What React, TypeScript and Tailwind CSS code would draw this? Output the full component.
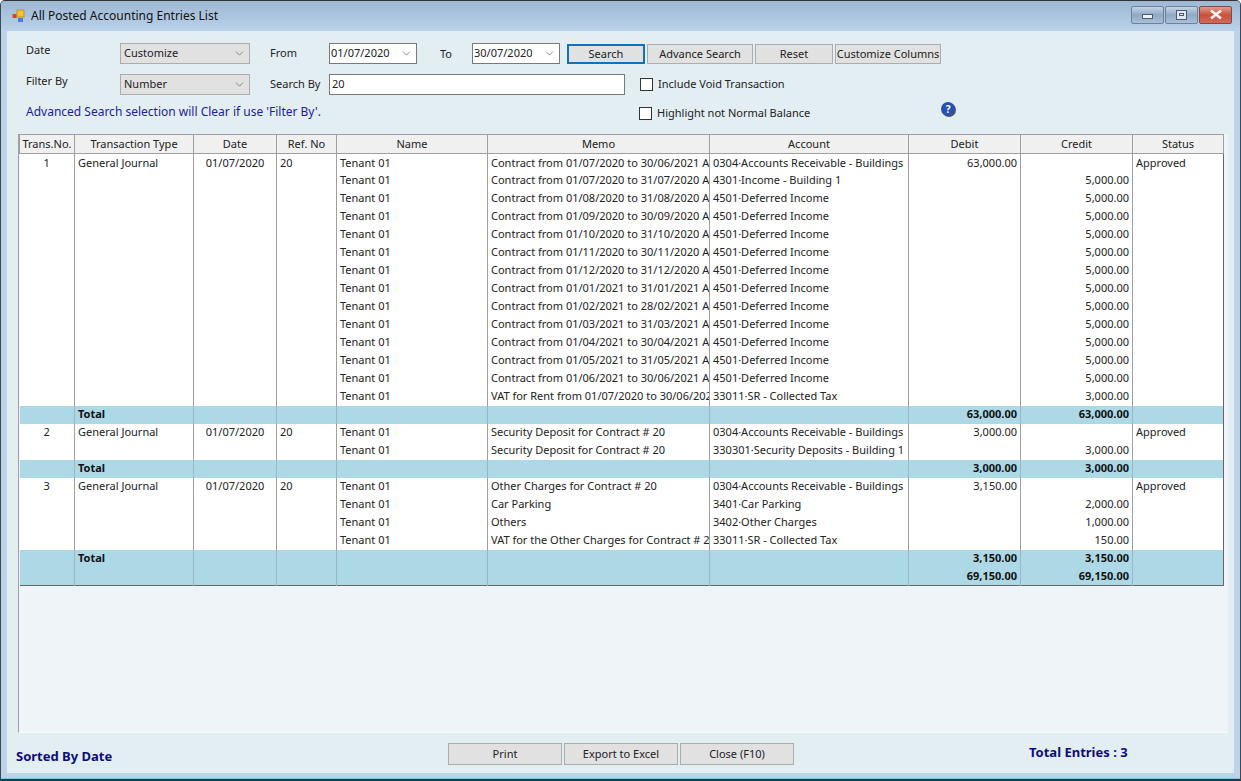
import { ChevronDown } from "lucide-react";

const cols = [55, 119, 83, 60, 151, 222, 199, 112, 112, 91];

type Row = {
  no?: string;
  type?: string;
  date?: string;
  ref?: string;
  name?: string;
  memo?: string;
  account?: string;
  debit?: string;
  credit?: string;
  status?: string;
  total?: boolean;
};

const contract = (memo: string, account: string, credit = "5,000.00"): Row => ({
  name: "Tenant 01",
  memo,
  account,
  credit,
});

const rows: Row[] = [
  {
    no: "1",
    type: "General Journal",
    date: "01/07/2020",
    ref: "20",
    name: "Tenant 01",
    memo: "Contract from 01/07/2020 to 30/06/2021 Annual Rent",
    account: "0304·Accounts Receivable - Buildings",
    debit: "63,000.00",
    status: "Approved",
  },
  contract("Contract from 01/07/2020 to 31/07/2020 Annual Rent", "4301·Income - Building 1"),
  contract("Contract from 01/08/2020 to 31/08/2020 Annual Rent", "4501·Deferred Income"),
  contract("Contract from 01/09/2020 to 30/09/2020 Annual Rent", "4501·Deferred Income"),
  contract("Contract from 01/10/2020 to 31/10/2020 Annual Rent", "4501·Deferred Income"),
  contract("Contract from 01/11/2020 to 30/11/2020 Annual Rent", "4501·Deferred Income"),
  contract("Contract from 01/12/2020 to 31/12/2020 Annual Rent", "4501·Deferred Income"),
  contract("Contract from 01/01/2021 to 31/01/2021 Annual Rent", "4501·Deferred Income"),
  contract("Contract from 01/02/2021 to 28/02/2021 Annual Rent", "4501·Deferred Income"),
  contract("Contract from 01/03/2021 to 31/03/2021 Annual Rent", "4501·Deferred Income"),
  contract("Contract from 01/04/2021 to 30/04/2021 Annual Rent", "4501·Deferred Income"),
  contract("Contract from 01/05/2021 to 31/05/2021 Annual Rent", "4501·Deferred Income"),
  contract("Contract from 01/06/2021 to 30/06/2021 Annual Rent", "4501·Deferred Income"),
  contract("VAT for Rent from 01/07/2020 to 30/06/2021", "33011·SR - Collected Tax", "3,000.00"),
  { type: "Total", debit: "63,000.00", credit: "63,000.00", total: true },
  {
    no: "2",
    type: "General Journal",
    date: "01/07/2020",
    ref: "20",
    name: "Tenant 01",
    memo: "Security Deposit for Contract # 20",
    account: "0304·Accounts Receivable - Buildings",
    debit: "3,000.00",
    status: "Approved",
  },
  contract("Security Deposit for Contract # 20", "330301·Security Deposits - Building 1", "3,000.00"),
  { type: "Total", debit: "3,000.00", credit: "3,000.00", total: true },
  {
    no: "3",
    type: "General Journal",
    date: "01/07/2020",
    ref: "20",
    name: "Tenant 01",
    memo: "Other Charges for Contract # 20",
    account: "0304·Accounts Receivable - Buildings",
    debit: "3,150.00",
    status: "Approved",
  },
  contract("Car Parking", "3401·Car Parking", "2,000.00"),
  contract("Others", "3402·Other Charges", "1,000.00"),
  contract("VAT for the Other Charges for Contract # 20", "33011·SR - Collected Tax", "150.00"),
  { type: "Total", debit: "3,150.00", credit: "3,150.00", total: true },
  { debit: "69,150.00", credit: "69,150.00", total: true },
];

function Combo({ value }: { value: string }) {
  return (
    <div className="flex h-[21px] w-[130px] items-center justify-between border border-[#adadad] bg-[#e1e1e1] pl-[3px] pr-[3px]">
      <span>{value}</span>
      <ChevronDown size={13} strokeWidth={1.2} className="text-[#555]" />
    </div>
  );
}

function DateBox({ value }: { value: string }) {
  return (
    <div className="flex h-[21px] w-[88px] items-center justify-between border border-[#7a7a7a] bg-white pl-[1px] pr-[3px]">
      <span>{value}</span>
      <ChevronDown size={13} strokeWidth={1.2} className="text-[#555]" />
    </div>
  );
}

function Btn({ label, w, active }: { label: string; w: string; active?: boolean }) {
  return (
    <button
      className={`${w} h-full shrink-0 bg-[#e1e1e1] text-center ${
        active ? "border-2 border-[#0f72bd]" : "border border-[#adadad]"
      }`}
    >
      {label}
    </button>
  );
}

function Check({ label }: { label: string }) {
  return (
    <div className="flex items-center gap-[5px]">
      <span className="h-[13px] w-[13px] border border-[#333] bg-white" />
      <span>{label}</span>
    </div>
  );
}

function WinBtn({ kind }: { kind: "min" | "max" | "close" }) {
  if (kind === "close") {
    return (
      <div className="flex h-[18px] w-[33px] items-center justify-center rounded-[2px] border border-[#7d4a45] bg-gradient-to-b from-[#e09a8c] via-[#c9503c] to-[#d06a58]">
        <svg width="14" height="11" viewBox="0 0 14 11">
          <path d="M2 1.5 L12 9.5 M12 1.5 L2 9.5" stroke="#f4f4f4" strokeWidth="2.6" />
        </svg>
      </div>
    );
  }
  return (
    <div className="flex h-[18px] w-[33px] items-center justify-center rounded-[2px] border border-[#6d8199] bg-gradient-to-b from-[#c3d4e6] via-[#8fa9c6] to-[#a9c0d8]">
      {kind === "min" ? (
        <span className="mt-[4px] h-[5px] w-[11px] border border-[#4d5a68] bg-[#eef3f8]" />
      ) : (
        <span className="flex h-[10px] w-[11px] items-center justify-center border border-[#4d5a68] bg-[#dfe8f1]">
          <span className="h-[3px] w-[5px] border border-[#4d5a68]" />
        </span>
      )}
    </div>
  );
}

export default function App() {
  return (
    <div
      className="flex h-[781px] w-[1241px] flex-col overflow-hidden rounded-t-[5px] border-x border-t border-b-2 border-x-[#3c4a55] border-t-[#333] border-b-[#1f3a48] bg-[#bcd3ea] text-[#222] text-[11px]"
      style={{ fontFamily: '"Noto Sans", Tahoma, sans-serif' }}
    >
      {/* title bar */}
      <div className="flex h-[30px] shrink-0 items-center justify-between bg-gradient-to-b from-[#9db8d4] to-[#bad2ea] pl-[11px] pr-[8px]">
        <div className="flex items-center gap-[5px]">
          <svg width="14" height="14" viewBox="0 0 14 14">
            <rect x="5" y="1" width="7" height="7" fill="#f4c430" stroke="#b98a10" strokeWidth="0.8" />
            <rect x="0.5" y="5" width="4" height="4" fill="#d8432c" />
            <rect x="6" y="9" width="5" height="4" fill="#4f7fd0" />
          </svg>
          <span className="text-[12px] text-[#111]">All Posted Accounting Entries List</span>
        </div>
        <div className="flex gap-[1px] pb-[3px]">
          <WinBtn kind="min" />
          <WinBtn kind="max" />
          <WinBtn kind="close" />
        </div>
      </div>

      <div className="mx-[6px] flex min-h-0 flex-1 flex-col bg-[#e3eef2]">
        {/* filters */}
        <div className="h-[103px] shrink-0 pl-[19px] pt-[12px]">
          <div className="flex h-[21px] items-center">
            <span className="w-[94px] -translate-y-[3px]">Date</span>
            <Combo value="Customize" />
            <span className="ml-[20px] w-[59px]">From</span>
            <DateBox value="01/07/2020" />
            <span className="ml-[23px] w-[32px] translate-y-[1px]">To</span>
            <DateBox value="30/07/2020" />
            <div className="ml-[7px] flex h-[20px] gap-[2px] self-end">
              <Btn label="Search" w="w-[78px]" active />
              <Btn label="Advance Search" w="w-[106px]" />
              <Btn label="Reset" w="w-[78px]" />
              <Btn label="Customize Columns" w="w-[106px]" />
            </div>
          </div>
          <div className="mt-[10px] flex h-[21px] items-center">
            <span className="w-[94px] -translate-y-[3px]">Filter By</span>
            <Combo value="Number" />
            <span className="ml-[20px] w-[59px]">Search By</span>
            <div className="flex h-[21px] w-[296px] items-center border border-[#7a7a7a] bg-white pl-[2px]">20</div>
            <div className="ml-[15px]">
              <Check label="Include Void Transaction" />
            </div>
          </div>
          <div className="flex items-start">
            <span className="mt-[8px] w-[613px] text-[12px] text-[#1c1c9c]">
              Advanced Search selection will Clear if use 'Filter By'.
            </span>
            <div className="mt-[10px]">
              <Check label="Highlight not Normal Balance" />
            </div>
            <span className="ml-[131px] mt-[7px] flex h-[14px] w-[14px] items-center justify-center rounded-full bg-[#2a50b4] text-[10px] font-bold leading-none text-white shadow-[1px_1px_0_#555]">
              ?
            </span>
          </div>
        </div>

        {/* grid */}
        <div className="ml-[11px] mr-[6px] h-[599px] shrink-0 border-b border-l border-b-[#f8fbfc] border-l-[#a0a0a0] bg-[#eff4f8]">
          <table className="w-[1204px] table-fixed border-collapse border-r border-b border-r-[#666] border-b-[#666]">
            <colgroup>
              {cols.map((w, i) => (
                <col key={i} style={{ width: w }} />
              ))}
            </colgroup>
            <thead>
              <tr className="h-[19px] bg-[#f0f0f0]">
                {["Trans.No.", "Transaction Type", "Date", "Ref. No", "Name", "Memo", "Account", "Debit", "Credit", "Status"].map(
                  (h) => (
                    <th key={h} className="border border-[#a0a0a0] p-0 text-center font-normal whitespace-nowrap">
                      {h}
                    </th>
                  ),
                )}
              </tr>
            </thead>
            <tbody>
              {rows.map((r, i) => {
                const cell = `h-[18px] overflow-hidden whitespace-nowrap border-r p-0 ${
                  r.total ? "border-r-[#9bb7c2] font-bold text-[#111]" : "border-r-[#a0a0a0]"
                }`;
                return (
                  <tr key={i} className={r.total ? "bg-[#add8e6]" : "bg-white"}>
                    <td className={`${cell} text-center`}>{r.no}</td>
                    <td className={`${cell} pl-[3px]`}>{r.type}</td>
                    <td className={`${cell} text-center`}>{r.date}</td>
                    <td className={`${cell} pl-[3px]`}>{r.ref}</td>
                    <td className={`${cell} pl-[3px]`}>{r.name}</td>
                    <td className={`${cell} pl-[3px]`}>{r.memo}</td>
                    <td className={`${cell} pl-[3px]`}>{r.account}</td>
                    <td className={`${cell} pr-[3px] text-right`}>{r.debit}</td>
                    <td className={`${cell} pr-[3px] text-right`}>{r.credit}</td>
                    <td className={`${cell} border-r-0 pl-[3px]`}>{r.status}</td>
                  </tr>
                );
              })}
            </tbody>
          </table>
        </div>

        {/* footer */}
        <div className="relative flex flex-1 items-start pl-[9px] pt-[10px]">
          <span className="mt-[4px] w-[432px] text-[13px] font-bold text-[#0c0c7c]">Sorted By Date</span>
          <div className="flex h-[22px] gap-[2px]">
            <Btn label="Print" w="w-[114px]" />
            <Btn label="Export to Excel" w="w-[114px]" />
            <Btn label="Close (F10)" w="w-[114px]" />
          </div>
          <span className="ml-[235px] text-[13px] font-bold text-[#0c0c7c]">Total Entries : 3</span>
        </div>
      </div>
      <div className="h-[6px] shrink-0 border-b border-b-[#7cc4e8]" />
    </div>
  );
}
